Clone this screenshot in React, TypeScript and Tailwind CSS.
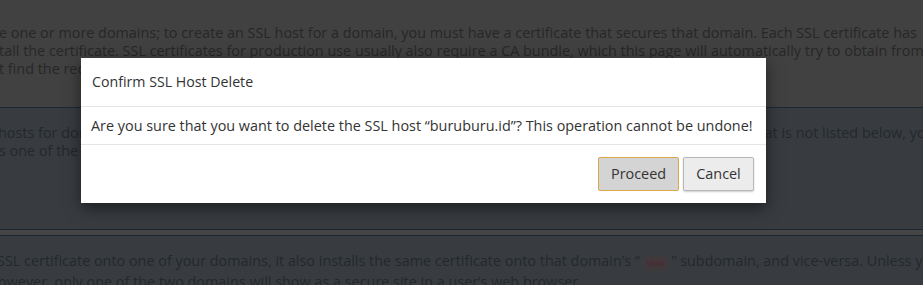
import React from 'react';

const Line: React.FC<{ children: React.ReactNode; className?: string }> = ({ children, className = '' }) => (
  <p className={`whitespace-nowrap leading-[18px] ${className}`}>{children}</p>
);

const ConfirmModal: React.FC = () => (
  <div className="absolute left-[81px] top-[58px] w-[685px] bg-white text-[#333] shadow-[0_5px_15px_rgba(0,0,0,0.5)]">
    <div className="h-[49px] flex items-center px-[11px] border-b border-[#e5e5e5]">
      <h4 className="text-[14.2px]">Confirm SSL Host Delete</h4>
    </div>
    <div className="h-[38px] flex items-center px-[10px] border-b border-[#e5e5e5]">
      <p className="text-[14.4px] whitespace-nowrap">
        Are you sure that you want to delete the SSL host “buruburu.id”? This operation cannot be undone!
      </p>
    </div>
    <div className="h-[58px] flex items-center justify-end gap-[4px] pr-[12px]">
      <button className="h-[34px] w-[81px] text-[14.4px] text-[#333] bg-[#d4d4d4] border border-[#dba64c] rounded-[2px]">
        Proceed
      </button>
      <button className="h-[34px] w-[71px] text-[14.4px] text-[#333] bg-[#ececec] border border-[#b8b8b8] rounded-[2px] shadow-[0_1px_2px_rgba(0,0,0,0.2)]">
        Cancel
      </button>
    </div>
  </div>
);

const App: React.FC = () => {
  return (
    <div
      className="relative w-[923px] h-[285px] overflow-hidden text-[14.4px]"
      style={{ fontFamily: '"Open Sans", "Noto Sans", sans-serif' }}
    >
      <section className="h-[108px] bg-[#414141] text-[#272727] pt-[24px] border-b border-[#1b2733]">
        <Line className="-ml-[1px]">
          e one or more domains; to create an SSL host for a domain, you must have a certificate that secures that domain. Each SSL certificate has
        </Line>
        <Line className="-ml-[1px]">
          tall the certificate. SSL certificates for production use usually also require a CA bundle, which this page will automatically try to obtain from
        </Line>
        <Line className="-ml-[1px]">t find the required CA bundle, you must paste it.</Line>
      </section>
      <section className="h-[122px] bg-[#383c40] text-[#24282b] pt-[16px] border-b border-[#1b2733]">
        <Line className="-ml-[2px]">
          hosts for domains on your account. If you want to install an SSL certificate for a subdomain or an addon domain that is not listed below, you must
        </Line>
        <Line className="-ml-[1px]">s one of the domains.</Line>
      </section>
      <div className="h-[6px] bg-[#454545] border-b border-[#1b2733]" />
      <section className="h-[60px] bg-[#383c40] text-[#24282b] pt-[16px]">
        <Line className="-ml-[3px]">
          SSL certificate onto one of your domains, it also installs the same certificate onto that domain’s “{' '}
          <code className="text-[10px] px-[3px] py-[2px] bg-[#3f393c] text-[#4d2a33] rounded-[2px] font-['Liberation_Mono']">www</code>
          {' '}” subdomain, and vice-versa. Unless you
        </Line>
        <Line className="-ml-[2px]">
          owever, only one of the two domains will show as a secure site in a user’s web browser.
        </Line>
      </section>
      <ConfirmModal />
    </div>
  );
};

export default App;
